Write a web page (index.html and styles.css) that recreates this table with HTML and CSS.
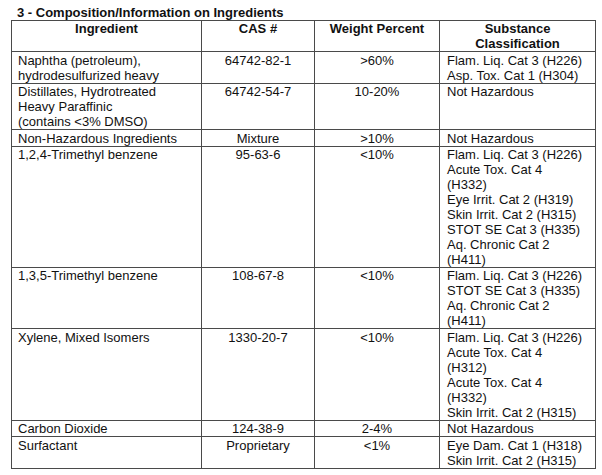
FILE: index.html
```html
<!DOCTYPE html>
<html>
<head>
<meta charset="utf-8">
<link rel="stylesheet" href="styles.css">
</head>
<body>
<h1 class="title">3 - Composition/Information on Ingredients</h1>
<table class="sds">
  <colgroup>
    <col class="c-ing">
    <col class="c-cas">
    <col class="c-wt">
    <col class="c-cls">
  </colgroup>
  <thead>
    <tr>
      <th>Ingredient</th>
      <th>CAS #</th>
      <th>Weight Percent</th>
      <th>Substance<br>Classification</th>
    </tr>
  </thead>
  <tbody>
    <tr>
      <td class="ing">Naphtha (petroleum),<br>hydrodesulfurized heavy</td>
      <td class="ctr">64742-82-1</td>
      <td class="ctr">&gt;60%</td>
      <td class="cls">Flam. Liq. Cat 3 (H226)<br>Asp. Tox. Cat 1 (H304)</td>
    </tr>
    <tr>
      <td class="ing">Distillates, Hydrotreated<br>Heavy Paraffinic<br>(contains &lt;3% DMSO)</td>
      <td class="ctr">64742-54-7</td>
      <td class="ctr">10-20%</td>
      <td class="cls">Not Hazardous</td>
    </tr>
    <tr>
      <td class="ing">Non-Hazardous Ingredients</td>
      <td class="ctr">Mixture</td>
      <td class="ctr">&gt;10%</td>
      <td class="cls">Not Hazardous</td>
    </tr>
    <tr>
      <td class="ing">1,2,4-Trimethyl benzene</td>
      <td class="ctr">95-63-6</td>
      <td class="ctr">&lt;10%</td>
      <td class="cls">Flam. Liq. Cat 3 (H226)<br>Acute Tox. Cat 4<br>(H332)<br>Eye Irrit. Cat 2 (H319)<br>Skin Irrit. Cat 2 (H315)<br>STOT SE Cat 3 (H335)<br>Aq. Chronic Cat 2<br>(H411)</td>
    </tr>
    <tr>
      <td class="ing">1,3,5-Trimethyl benzene</td>
      <td class="ctr">108-67-8</td>
      <td class="ctr">&lt;10%</td>
      <td class="cls">Flam. Liq. Cat 3 (H226)<br>STOT SE Cat 3 (H335)<br>Aq. Chronic Cat 2<br>(H411)</td>
    </tr>
    <tr>
      <td class="ing">Xylene, Mixed Isomers</td>
      <td class="ctr">1330-20-7</td>
      <td class="ctr">&lt;10%</td>
      <td class="cls">Flam. Liq. Cat 3 (H226)<br>Acute Tox. Cat 4<br>(H312)<br>Acute Tox. Cat 4<br>(H332)<br>Skin Irrit. Cat 2 (H315)</td>
    </tr>
    <tr>
      <td class="ing">Carbon Dioxide</td>
      <td class="ctr">124-38-9</td>
      <td class="ctr">2-4%</td>
      <td class="cls">Not Hazardous</td>
    </tr>
    <tr>
      <td class="ing">Surfactant</td>
      <td class="ctr">Proprietary</td>
      <td class="ctr">&lt;1%</td>
      <td class="cls">Eye Dam. Cat 1 (H318)<br>Skin Irrit. Cat 2 (H315)</td>
    </tr>
  </tbody>
</table>
</body>
</html>
```

FILE: styles.css
```css
html, body {
  margin: 0;
  padding: 0;
  background: #ffffff;
}

body {
  padding: 5px 0 0 11px;
  font-family: "Liberation Sans", Arial, sans-serif;
  color: #111111;
}

.title {
  margin: 0 0 0 6px;
  font-size: 13px;
  font-weight: bold;
  line-height: 15px;
}

.sds {
  border-collapse: collapse;
  width: 584px;
  table-layout: fixed;
  font-size: 13px;
  line-height: 15px;
}

.c-ing { width: 190px; }
.c-cas { width: 113px; }
.c-wt  { width: 125px; }
.c-cls { width: 156px; }

.sds th,
.sds td {
  border: 1px solid #4a4a4a;
  padding: 0.4px 0 0 0;
  vertical-align: top;
  white-space: nowrap;
}

.sds th {
  font-weight: bold;
  text-align: center;
}

.sds td.ing {
  padding-left: 6px;
  text-align: left;
}

.sds td.ctr {
  text-align: center;
}

.sds td.cls {
  padding-left: 7px;
  text-align: left;
}
```
